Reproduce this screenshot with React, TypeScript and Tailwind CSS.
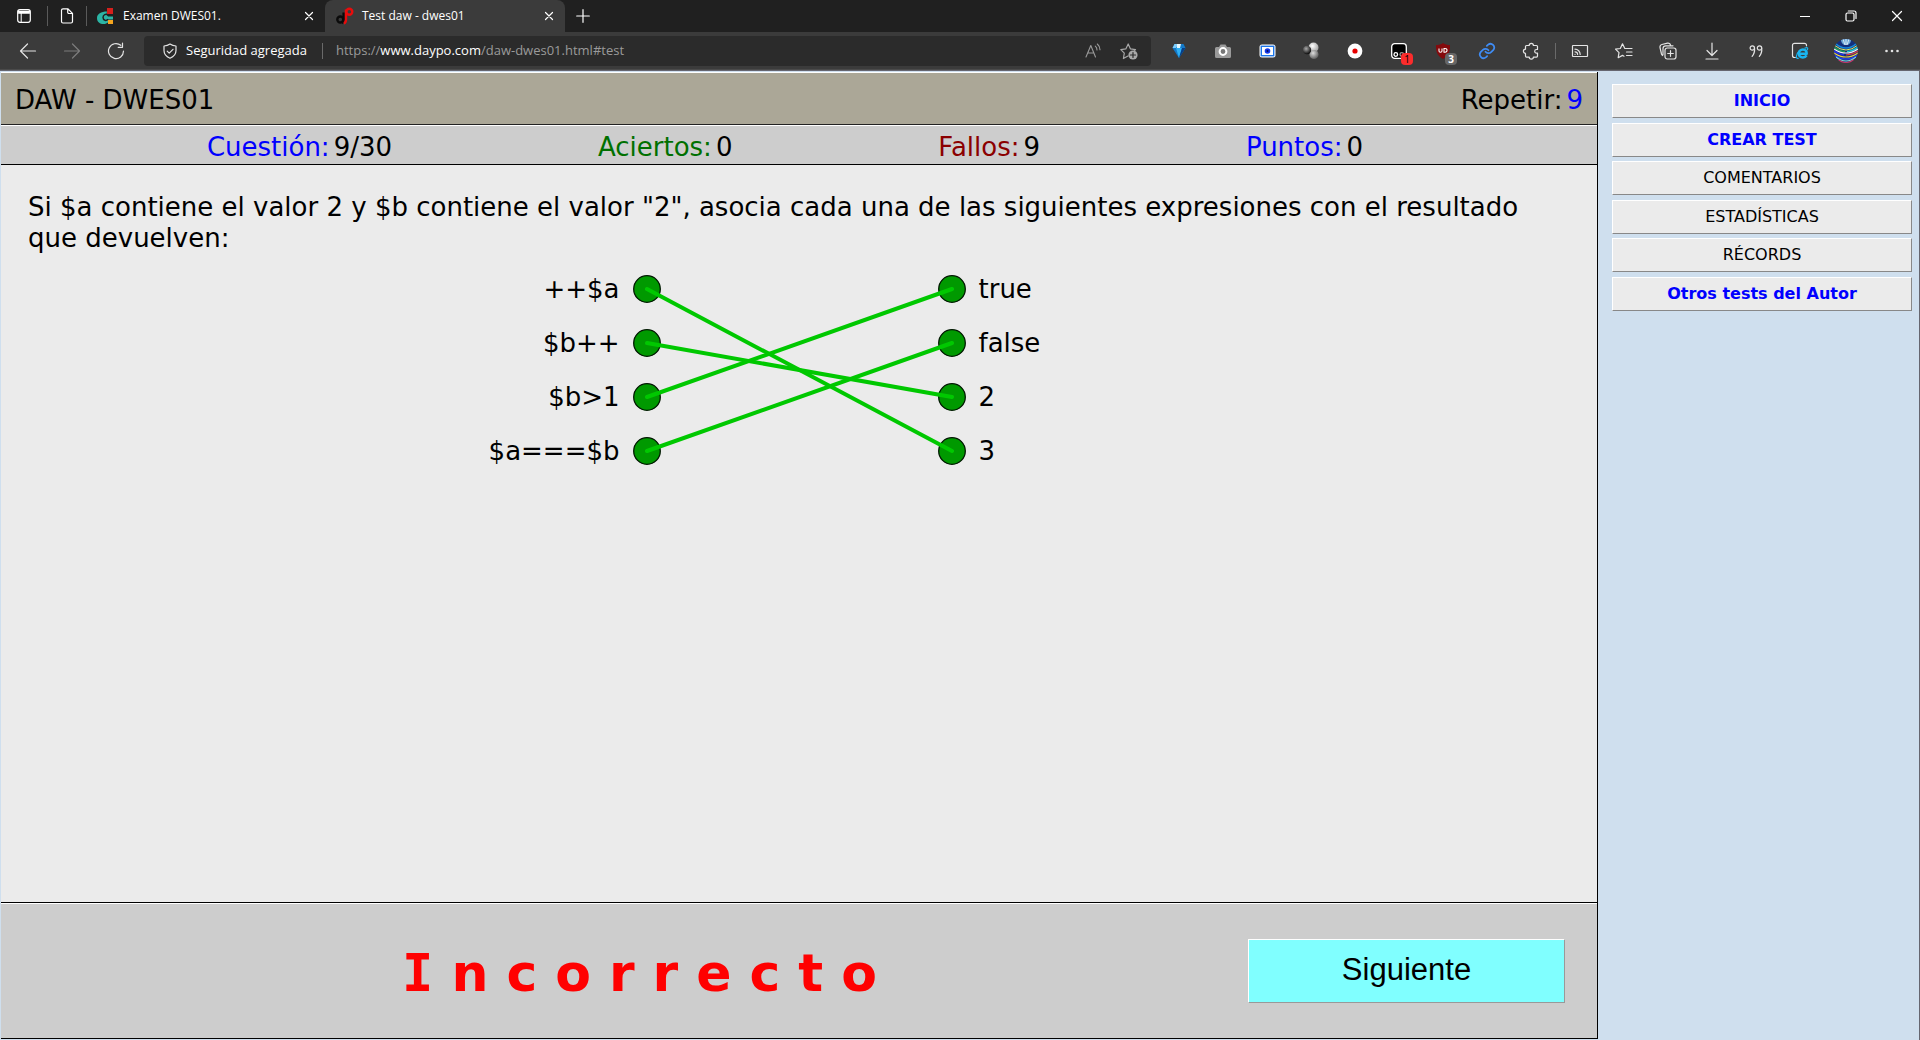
import React from "react";

const line = {
  fill: "none",
  stroke: "currentColor",
  strokeWidth: 1.2,
  strokeLinecap: "round" as const,
  strokeLinejoin: "round" as const,
};

function Icon({ size = 18, children }: { size?: number; children: React.ReactNode }) {
  return (
    <svg width={size} height={size} viewBox={`0 0 ${size} ${size}`} {...line} aria-hidden="true" className="shrink-0">
      {children}
    </svg>
  );
}

const CloseIcon = () => (
  <Icon size={10}>
    <path d="M1.5 1.5l7 7M8.5 1.5l-7 7" />
  </Icon>
);

function Tool({ label, children }: { label: string; children: React.ReactNode }) {
  return (
    <button type="button" aria-label={label} className="flex h-8 w-11 shrink-0 items-center justify-center text-[#e4e4e4]">
      {children}
    </button>
  );
}

function TabStrip() {
  return (
    <div className="flex h-8 items-center bg-[#202020] text-xs text-white">
      <button type="button" aria-label="Menú de pestañas" className="flex w-[47px] justify-center">
        <Icon size={14}>
          <rect x=".7" y=".7" width="12.600" height="12.600" rx="2.200" />
          <path d="M1.500 2.600h11M1.500 4h11" strokeWidth="1.600" />
          <path d="M4.200 4v9" strokeWidth="1" />
        </Icon>
      </button>
      <div className="h-5 w-px bg-[#5a5a5a]" />
      <button type="button" aria-label="Página" className="flex w-[38px] justify-center">
        <Icon size={16}>
          <path d="M4 .8h4.800L13.500 5.400V13.500a1.500 1.500 0 0 1-1.500 1.500H4a1.500 1.500 0 0 1-1.500-1.500V2.300A1.500 1.500 0 0 1 4 .8zM8.700 1v3.300a1.200 1.200 0 0 0 1.200 1.200h3.400" />
        </Icon>
      </button>
      <div className="h-5 w-px bg-[#5a5a5a]" />
      <div className="flex h-8 w-[238px] items-center pl-[10px] pr-[11px]">
        <svg width="16" height="16" viewBox="0 0 16 16" aria-hidden="true">
          <path d="M10 0h6v6h-6z" fill="#d5201c" />
          <path d="M11 12h5v4h-5z" fill="#f5a51f" />
          <path d="M10 3.500C4 3.500 0 6 0 10c0 4 3 6 6.500 6 2 0 3.500-.6 4.500-1.500v-3h5V8.500h-5c0-1-1-1.800-2.500-1.800-2 0-3.200 1.300-3.200 3.200 0 2 1.400 3 3 3" fill="#2bb5a5" />
          <path d="M11.500 7.800C10.500 6.500 9 6 7.700 6.600c-2.200 1-2.300 5 .3 5.700 1.300.3 2.300-.2 3-1.100" fill="none" stroke="#202020" strokeWidth="1.500" />
        </svg>
        <span className="ml-[10px] flex-1 font-['Open_Sans',sans-serif]">Examen DWES01.</span>
        <button type="button" aria-label="Cerrar Examen DWES01."><CloseIcon /></button>
      </div>
      <div className="flex h-8 w-60 items-center rounded-t-lg bg-[#3b3b3b] pl-[11px] pr-[11px]">
        <svg width="18" height="18" viewBox="0 0 18 18" fill="none" strokeWidth="2.400" aria-hidden="true">
          <circle cx="4.300" cy="12.500" r="3" stroke="#0b0b0b" />
          <path d="M7.600 5.500v7c0 2-.5 3-1.600 3.600" stroke="#0b0b0b" />
          <circle cx="13.300" cy="4.700" r="3" stroke="#e80c0c" />
          <path d="M10 2.500v10c0 2.300-.8 3.500-2.200 3.900" stroke="#e80c0c" />
        </svg>
        <span className="ml-2 flex-1 font-['Open_Sans',sans-serif]">Test daw - dwes01</span>
        <button type="button" aria-label="Cerrar Test daw - dwes01"><CloseIcon /></button>
      </div>
      <button type="button" aria-label="Nueva pestaña" className="flex w-9 justify-center">
        <Icon size={14}>
          <path d="M7 .7v12.600M.7 7h12.600" />
        </Icon>
      </button>
      <div className="flex-1" />
      <button type="button" aria-label="Minimizar" className="flex w-[46px] justify-center">
        <Icon size={10}><path d="M0 5.500h10" strokeWidth="1" /></Icon>
      </button>
      <button type="button" aria-label="Restaurar" className="flex w-[46px] justify-center">
        <Icon size={12}>
          <rect x="1" y="3" width="8" height="8" rx="1.500" />
          <path d="M3.300 1h5.700a2 2 0 0 1 2 2v5.500" />
        </Icon>
      </button>
      <button type="button" aria-label="Cerrar" className="flex w-[46px] justify-center">
        <Icon size={12}><path d="M1.500 1.500l9 9M10.500 1.500l-9 9" /></Icon>
      </button>
    </div>
  );
}

function AddressBar() {
  return (
    <div className="mr-[6px] flex h-[30px] min-w-0 flex-1 items-center rounded bg-[#2b2b2b] pl-[18px] text-[13px] font-['Open_Sans',sans-serif]">
      <span className="text-[#e4e4e4]">
        <Icon size={16}>
          <path d="M8 1c1.800 1.300 3.700 1.900 6 2v4.500c0 3.600-2 6-6 7.700-4-1.700-6-4.100-6-7.700V3c2.300-.1 4.200-.7 6-2z" />
          <path d="M5.200 8.200l2 2 3.800-3.900" />
        </Icon>
      </span>
      <span className="ml-2 w-[124px] whitespace-nowrap text-white">Seguridad agregada</span>
      <span className="ml-3 h-4 w-px bg-[#6a6a6a]" />
      <a href="#test" className="ml-[13px] flex-1 whitespace-nowrap text-[#9a9a9a]">
        https://<span className="text-white">www.daypo.com</span>/daw-dwes01.html#test
      </a>
      <button type="button" aria-label="Leer en voz alta" className="flex w-9 justify-center text-[#9a9a9a]">
        <Icon size={16}>
          <path d="M1 14L5.800 2.500 10.500 14M2.700 10h6.200M10.300 3.200c1.200 1 1.700 2.300 1.700 3.700M12.300 1c1.800 1.500 2.700 3.500 2.700 5.800" strokeWidth="1.100" />
        </Icon>
      </button>
      <button type="button" aria-label="Agregar a favoritos" className="mr-1 flex w-9 justify-center text-[#a8a8a8]">
        <Icon size={18}>
          <path d="M8 14l-4.600 2.500.9-5.300L.8 7.600l5-.7L8.200 2l2.300 4.900 5 .7-1.200 1.200" />
          <circle cx="13" cy="13" r="4.600" fill="#a8a8a8" stroke="none" />
          <path d="M13 10.500v5M10.500 13h5" stroke="#2b2b2b" />
        </Icon>
      </button>
    </div>
  );
}

function Toolbar() {
  return (
    <div className="flex h-[38px] items-center border-b border-[#4a4a4a] bg-[#3b3b3b] pl-[6px] pr-[6px]">
      <Tool label="Atrás">
        <Icon><path d="M16.500 9H1.500M8.500 2L1.500 9l7 7" /></Icon>
      </Tool>
      <button type="button" aria-label="Adelante" className="flex w-11 justify-center text-[#7c7c7c]">
        <Icon><path d="M1.500 9h15M9.500 2l7 7-7 7" /></Icon>
      </button>
      <Tool label="Actualizar">
        <Icon><path d="M16.500 9A7.500 7.500 0 1 1 13.800 3.300M15.500 1v4.300h-4.300" /></Icon>
      </Tool>
      <div className="w-[6px]" />
      <AddressBar />
      <Tool label="Gema">
        <svg width="14" height="16" viewBox="0 0 14 16" aria-hidden="true">
          <path d="M2.500 1h9L13.500 5 7 15 .5 5z" fill="#1379c8" />
          <path d="M2.500 1h4.500L4 5H.5z" fill="#7fcdfa" />
          <path d="M4 5h6L7 15z" fill="#2fb0f4" />
          <path d="M10 5h3.500L7 15z" fill="#083e86" />
          <path d="M5 1h4L8 5H5z" fill="#e5f8ff" />
        </svg>
      </Tool>
      <Tool label="Captura">
        <svg width="16" height="14" viewBox="0 0 16 14" aria-hidden="true">
          <path d="M1.500 3H4l1.500-2.500h5L12 3h2.500A1.500 1.500 0 0 1 16 4.500v8a1.500 1.500 0 0 1-1.500 1.500h-13A1.500 1.500 0 0 1 0 12.500v-8A1.500 1.500 0 0 1 1.500 3z" fill="#9a9a9a" />
          <circle cx="8" cy="7.500" r="3.400" fill="#777" stroke="#fff" strokeWidth="2" />
        </svg>
      </Tool>
      <Tool label="Visor">
        <svg width="17" height="14" viewBox="0 0 17 14" aria-hidden="true">
          <rect x=".5" y=".5" width="16" height="13" rx="2.500" fill="#fff" />
          <rect x="2.300" y="2.300" width="12.400" height="9.400" fill="#fff" stroke="#1b74e8" strokeWidth="1.400" />
          <circle cx="8.500" cy="7" r="2.800" fill="#1438e8" />
          <circle cx="8.500" cy="7" r="1" fill="#0a0a50" />
        </svg>
      </Tool>
      <Tool label="Esferas">
        <svg width="18" height="18" viewBox="0 0 18 18" aria-hidden="true">
          <defs>
            <radialGradient id="ballDark" cx=".4" cy=".35" r=".65"><stop offset="0" stopColor="#aaa" /><stop offset="1" stopColor="#0c0c0c" /></radialGradient>
            <radialGradient id="ballLight" cx=".4" cy=".35" r=".7"><stop offset="0" stopColor="#fff" /><stop offset="1" stopColor="#999" /></radialGradient>
            <radialGradient id="ballMid" cx=".4" cy=".35" r=".7"><stop offset="0" stopColor="#ddd" /><stop offset="1" stopColor="#555" /></radialGradient>
          </defs>
          <circle cx="11.500" cy="5.500" r="5" fill="url(#ballLight)" />
          <circle cx="12" cy="12.500" r="4.600" fill="url(#ballMid)" />
          <circle cx="5" cy="8" r="4.200" fill="url(#ballDark)" />
        </svg>
      </Tool>
      <Tool label="Grabar">
        <svg width="16" height="16" viewBox="0 0 16 16" aria-hidden="true">
          <circle cx="8" cy="8" r="7.400" fill="#fff" />
          <circle cx="8" cy="8" r="2.600" fill="#e80000" />
        </svg>
      </Tool>
      <Tool label="Scripts">
        <span className="relative">
          <svg width="16" height="16" viewBox="0 0 16 16" aria-hidden="true">
            <rect x=".7" y=".7" width="14.600" height="14.600" rx="3" fill="#000" stroke="#fff" strokeWidth="1.300" />
            <circle cx="4.800" cy="11.500" r="1.800" fill="none" stroke="#fff" strokeWidth="1.300" />
            <circle cx="10.800" cy="11.500" r="1.800" fill="none" stroke="#999" strokeWidth="1.300" />
          </svg>
          <span className="absolute left-[10px] top-[10px] h-3 w-3 rounded-sm bg-[#fb2c2c] text-center text-[10px] leading-3 text-black font-['Open_Sans',sans-serif]">1</span>
        </span>
      </Tool>
      <Tool label="Bloqueador">
        <span className="relative">
          <svg width="16" height="16" viewBox="0 0 16 16" aria-hidden="true">
            <path d="M8 0c2 1.400 4.300 2 7 2 .2 7-1.500 11-7 14C2.500 13 .8 9 1 2c2.700 0 5-.6 7-2z" fill="#850a0d" />
            <path d="M4 5.500v2.500c0 1.700 3 1.700 3 0V5.500M9 5.500v3.700h1c2.700 0 2.700-3.700 0-3.700z" fill="none" stroke="#fff" strokeWidth="1.100" />
          </svg>
          <span className="absolute left-[10px] top-[10px] h-3 w-3 rounded-sm bg-[#666] text-center text-[10px] font-bold leading-3 text-white font-['Open_Sans',sans-serif]">3</span>
        </span>
      </Tool>
      <Tool label="Enlace">
        <svg width="18" height="18" viewBox="0 0 24 24" fill="none" stroke="#3f8cf4" strokeWidth="2.300" strokeLinecap="round" aria-hidden="true">
          <path d="M10 13a5 5 0 0 0 7.500.5l3-3a5 5 0 0 0-7-7l-1.700 1.700M14 11a5 5 0 0 0-7.500-.5l-3 3a5 5 0 0 0 7 7l1.700-1.700" />
        </svg>
      </Tool>
      <Tool label="Extensiones">
        <Icon size={18}>
          <path d="M4.500 3.500h2.700a2.100 2.100 0 0 1 4.200 0h3.100a1 1 0 0 1 1 1V7.500h-1a1.800 1.800 0 0 0 0 3.600h1v3a1 1 0 0 1-1 1h-3.100a2.100 2.100 0 0 1-4.200 0H4.500a1 1 0 0 1-1-1v-2.700a2.100 2.100 0 0 1 0-4.200V4.500a1 1 0 0 1 1-1z" />
        </Icon>
      </Tool>
      <div className="mx-[2px] h-4 w-px bg-[#6a6a6a]" />
      <Tool label="Transmitir">
        <Icon size={18}>
          <rect x="1.500" y="3.500" width="15" height="11" rx=".5" />
          <path d="M4 12.300h.1M4 9.800a2.600 2.600 0 0 1 2.600 2.600M4 7.200a5.200 5.200 0 0 1 5.200 5.200" />
        </Icon>
      </Tool>
      <Tool label="Favoritos">
        <Icon size={18}>
          <path d="M10 6.500h7M11.500 10h5.500M11.500 13.500H17M10.800 6.500H9.800L7.500 1.800 5.300 6.500l-4.800.7L4 10.700l-.8 5 4.300-2.300 1.500.8" />
        </Icon>
      </Tool>
      <Tool label="Colecciones">
        <Icon size={18}>
          <rect x="6" y="6" width="11" height="11" rx="2.200" />
          <path d="M11.500 8.700v5.600M8.700 11.500h5.600M3.700 13.500A2.600 2.600 0 0 1 2.500 12L1 5.500a2.500 2.500 0 0 1 1.900-3L8.500 1.200a2.500 2.500 0 0 1 3 1.900l.1.600M4 12.500V6.500A2.800 2.800 0 0 1 6.800 3.800H14" />
        </Icon>
      </Tool>
      <Tool label="Descargas">
        <Icon size={18}><path d="M9 1v12M4 8.500L9 13.500l5-5M3 17h12" /></Icon>
      </Tool>
      <Tool label="Citar">
        <Icon size={14}>
          <circle cx="3.300" cy="4" r="2.200" />
          <path d="M5.500 4c.4 3.500-.5 6.200-2.400 8.300" />
          <circle cx="10.500" cy="4" r="2.200" />
          <path d="M12.700 4c.4 3.500-.5 6.200-2.400 8.300" />
        </Icon>
      </Tool>
      <Tool label="Modo Internet Explorer">
        <Icon size={18}>
          <path d="M15.500 3.800V3.300A2 2 0 0 0 13.500 1.300h-10a2 2 0 0 0-2 2v10.200a2 2 0 0 0 2 2h.8" />
          <g stroke="#19b5f1" strokeLinecap="butt">
            <path d="M15.600 13.300c-.8 1.400-2.100 2.100-3.700 2.100-2.400 0-4-1.600-4-3.900s1.700-4 4-4c2.500 0 3.900 1.700 3.800 4.200H9" strokeWidth="2.500" />
            <path d="M8.500 8.500c-3.700 4-4.300 8.600-.8 7.900M13.500 6.300c2.600-1.400 4-.7 2.800 2" strokeWidth="1.200" />
          </g>
        </Icon>
      </Tool>
      <button type="button" aria-label="Perfil" className="flex w-12 justify-center">
        <svg width="24" height="24" viewBox="0 0 24 24" fill="none" aria-hidden="true">
          <defs><clipPath id="avatar"><circle cx="12" cy="12" r="12" /></clipPath></defs>
          <g clipPath="url(#avatar)" strokeWidth="1.600">
            <path d="M0 0h24v24H0z" fill="#15307c" />
            <path d="M7 0c0 4 2 6 5 6s5-2 5-6" fill="#6fa9d8" />
            <path d="M9 0l2 6M12 0v6M15 0l-2 6" stroke="#eef6fa" strokeWidth=".8" />
            <path d="M1 4q5 5 11 5t11-5" stroke="#1688d8" />
            <path d="M0 6q6 5 12 5t12-5" stroke="#e6e85a" strokeWidth="1" />
            <path d="M0 8q5 4 11 4.500" stroke="#1fa650" />
            <path d="M24 8q-5 4-11 4.500" stroke="#1dd0d8" />
            <path d="M0 10q6 4 12 4t12-4" stroke="#f4f4f4" strokeWidth="1.200" />
            <path d="M0 12q4 3 10 4" stroke="#2230e8" />
            <path d="M24 12q-4 3-12 4" stroke="#e23c3d" strokeWidth="1.200" />
            <path d="M0 14q6 4 12 4t12-4" stroke="#f0d438" strokeWidth="1.100" />
            <path d="M0 16q6 4 12 4t12-4" stroke="#2440e0" />
            <path d="M2 18q5 4 10 4t10-4" stroke="#7be0d8" strokeWidth="1.100" />
            <path d="M4 21q4 3 8 3t8-3" stroke="#cf3c64" />
          </g>
        </svg>
      </button>
      <Tool label="Más opciones">
        <svg width="14" height="4" viewBox="0 0 14 4" fill="currentColor" aria-hidden="true">
          <circle cx="1.500" cy="2" r="1.300" /><circle cx="7" cy="2" r="1.300" /><circle cx="12.500" cy="2" r="1.300" />
        </svg>
      </Tool>
    </div>
  );
}

const stats = [
  { name: "Cuestión:", value: "9/30", tone: "text-[#0000ff]" },
  { name: "Aciertos:", value: "0", tone: "text-[#007000]" },
  { name: "Fallos:", value: "9", tone: "text-[#8b0000]" },
  { name: "Puntos:", value: "0", tone: "text-[#0000ff]" },
];

const expressions = ["++$a", "$b++", "$b>1", "$a===$b"];
const results = ["true", "false", "2", "3"];
const matches = [3, 2, 0, 1];
const ROW = 54;

function MatchBoard() {
  const y = (row: number) => ROW / 2 + row * ROW;
  return (
    <div className="mt-2 flex leading-[54px]">
      <ul className="flex-1 pr-[13px] text-right">
        {expressions.map((e) => <li key={e}>{e}</li>)}
      </ul>
      <svg width="334" height="216" viewBox="0 0 334 216" role="img" aria-label="Asociaciones" className="shrink-0">
        {matches.map((_, i) => (
          <g key={i} fill="#009900" stroke="#001800" strokeWidth="1.300">
            <circle cx="14" cy={y(i)} r="13.300" />
            <circle cx="319" cy={y(i)} r="13.300" />
          </g>
        ))}
        {matches.map((to, from) => (
          <line key={from} x1="14" y1={y(from)} x2="319" y2={y(to)} stroke="#00c800" strokeWidth="4" strokeLinecap="round" />
        ))}
      </svg>
      <ul className="flex-1 pl-3">
        {results.map((r) => <li key={r}>{r}</li>)}
      </ul>
    </div>
  );
}

const links = [
  { text: "INICIO", strong: true },
  { text: "CREAR TEST", strong: true },
  { text: "COMENTARIOS", strong: false },
  { text: "ESTADÍSTICAS", strong: false },
  { text: "RÉCORDS", strong: false },
  { text: "Otros tests del Autor", strong: true },
];

export default function App() {
  return (
    <div className="flex h-screen flex-col overflow-hidden bg-[#cfdfee] text-black font-['DejaVu_Sans',sans-serif]">
      <TabStrip />
      <Toolbar />
      <div className="flex min-h-0 flex-1 border-r border-t border-[#666670] pb-px pl-px pt-px">
        <main className="flex min-w-0 flex-1 flex-col border-b border-r border-black text-[26px]">
          <header className="flex h-[53px] items-center justify-between border-b border-t border-b-[#222] border-t-white bg-[#aba797] px-[14px] pt-1">
            <h1>DAW - DWES01</h1>
            <p>Repetir:<span className="ml-1 text-[#0000ff]">9</span></p>
          </header>
          <div className="flex h-10 items-center justify-evenly border-b border-t border-b-black border-t-white bg-[#cdcdcd] pr-7 pt-1">
            {stats.map((s) => (
              <p key={s.name}><span className={s.tone}>{s.name}</span><span className="ml-1">{s.value}</span></p>
            ))}
          </div>
          <section className="flex-1 bg-[#ebebeb] pt-[27px]">
            <p className="pl-[27px] pr-10 leading-[31px]">
              Si $a contiene el valor 2 y $b contiene el valor "2", asocia cada una de las siguientes expresiones con el resultado que devuelven:
            </p>
            <MatchBoard />
          </section>
          <footer className="flex h-[136px] items-center border-t border-black bg-[#cdcdcd] pr-8 shadow-[inset_0_1px_0_#fff]">
            <p className="flex-1 pl-12 pt-1 text-center text-[52px] font-bold leading-[60px] tracking-[18px] text-[#ff0000] first-letter:font-['DejaVu_Sans_Mono']">Incorrecto</p>
            <button type="button" className="h-16 w-[317px] border border-b-[#999] border-l-white border-r-[#999] border-t-white bg-[#80ffff] text-[31px] font-['Liberation_Sans',sans-serif]">Siguiente</button>
          </footer>
        </main>
        <nav className="flex h-[239px] w-[321px] flex-col justify-between pl-[14px] pr-[7px] pt-3 text-base">
          {links.map((l) => (
            <a
              key={l.text}
              href="#test"
              className={
                "border border-b-[#888] border-l-white border-r-[#888] border-t-white bg-[#ebebeb] py-1 text-center " +
                (l.strong ? "font-bold text-[#0000ff]" : "")
              }
            >
              {l.text}
            </a>
          ))}
        </nav>
      </div>
    </div>
  );
}
